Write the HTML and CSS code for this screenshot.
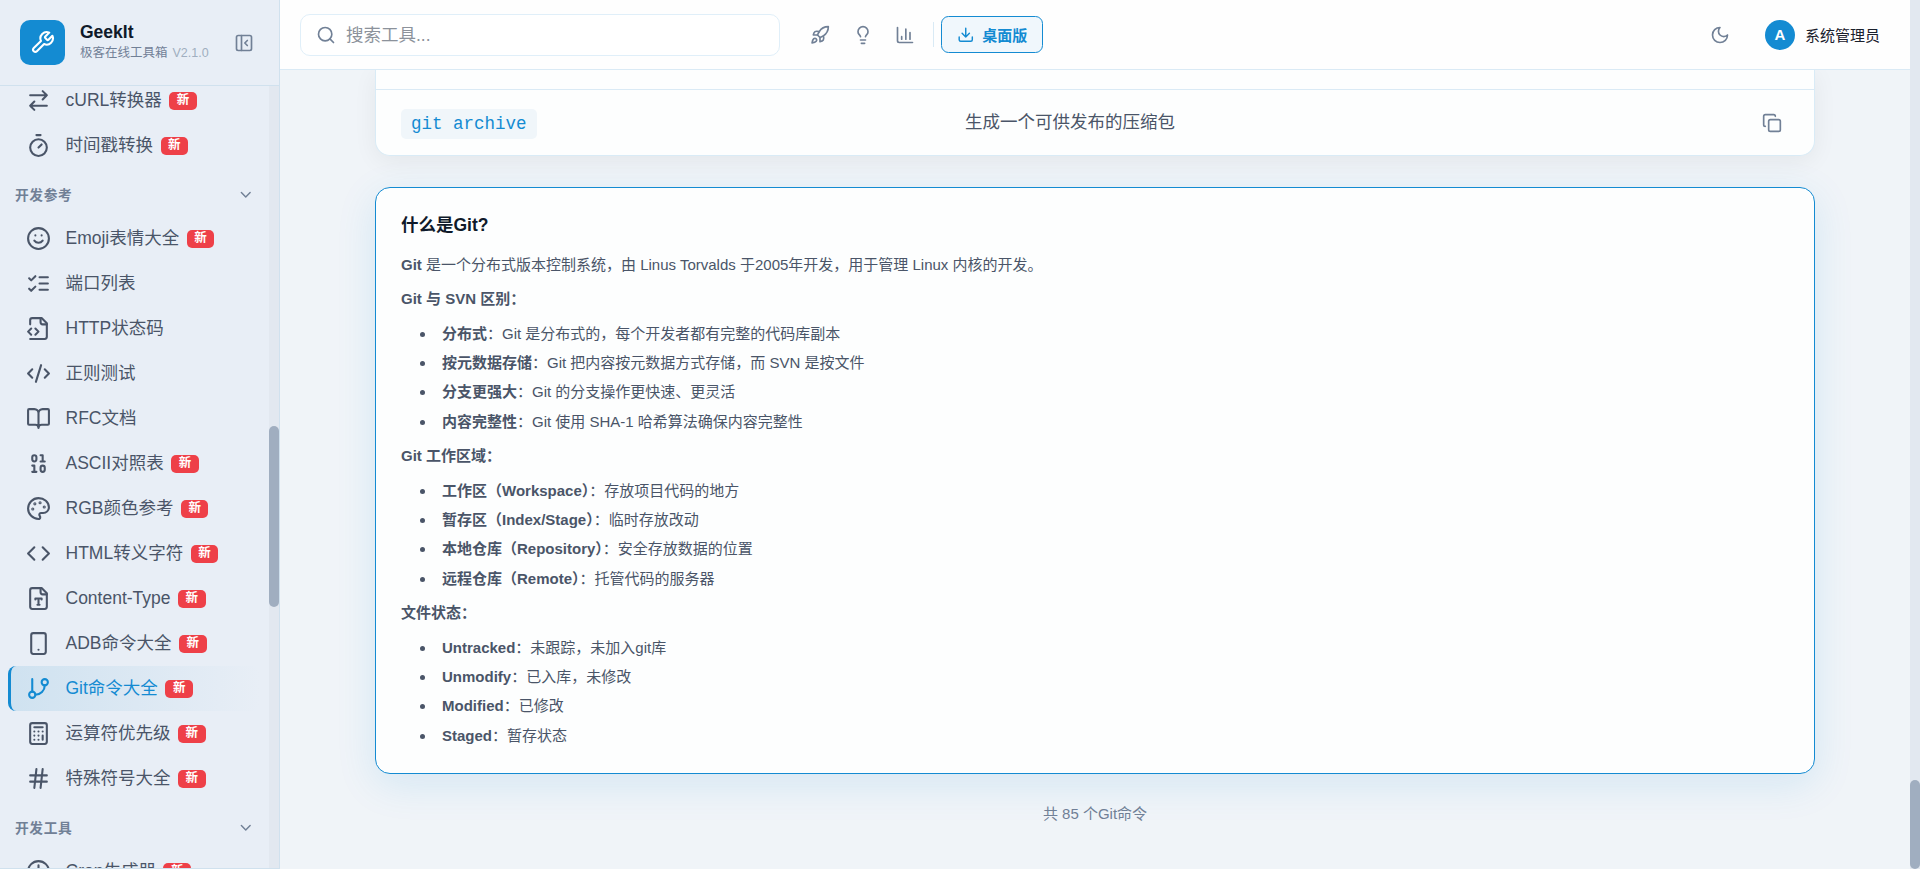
FILE: index.html
```html
<!DOCTYPE html>
<html lang="zh-CN">
<head>
    <meta charset="UTF-8">
    <meta name="viewport" content="width=device-width, initial-scale=1.0">
    <title>Git命令大全 - GeekIt</title>
    <link rel="stylesheet" href="styles.css">
</head>

<body>
    <!-- icon set -->
    <svg class="sprite">
        <symbol id="wrench" viewBox="0 0 24 24"><path d="M14.7 6.3a1 1 0 0 0 0 1.4l1.6 1.6a1 1 0 0 0 1.4 0l3.77-3.77a6 6 0 0 1-7.94 7.94l-6.91 6.91a2.12 2.12 0 0 1-3-3l6.91-6.91a6 6 0 0 1 7.94-7.94l-3.76 3.76z"/></symbol>
        <symbol id="panel" viewBox="0 0 24 24"><rect x="3" y="3" width="18" height="18" rx="2"/><path d="M9 3v18M16 15l-3-3 3-3"/></symbol>
        <symbol id="chevron" viewBox="0 0 24 24"><path d="m6 9 6 6 6-6"/></symbol>
        <symbol id="swap" viewBox="0 0 24 24"><path d="m16 3 4 4-4 4M20 7H4M8 21l-4-4 4-4M4 17h16"/></symbol>
        <symbol id="timer" viewBox="0 0 24 24"><path d="M10 2h4M12 14l3-3"/><circle cx="12" cy="14" r="8"/></symbol>
        <symbol id="smile" viewBox="0 0 24 24"><circle cx="12" cy="12" r="10"/><path d="M8 14s1.5 2 4 2 4-2 4-2M9 9h.01M15 9h.01"/></symbol>
        <symbol id="checks" viewBox="0 0 24 24"><path d="m3 17 2 2 4-4M3 7l2 2 4-4M13 6h8M13 12h8M13 18h8"/></symbol>
        <symbol id="filecode" viewBox="0 0 24 24"><path d="M4 22h14a2 2 0 0 0 2-2V7l-5-5H6a2 2 0 0 0-2 2v4"/><path d="M14 2v4a2 2 0 0 0 2 2h4M5 12l-3 3 3 3M9 18l3-3-3-3"/></symbol>
        <symbol id="codexml" viewBox="0 0 24 24"><path d="m18 16 4-4-4-4M6 8l-4 4 4 4M14.5 4l-5 16"/></symbol>
        <symbol id="book" viewBox="0 0 24 24"><path d="M12 7v14M3 18a1 1 0 0 1-1-1V4a1 1 0 0 1 1-1h5a4 4 0 0 1 4 4 4 4 0 0 1 4-4h5a1 1 0 0 1 1 1v13a1 1 0 0 1-1 1h-6a3 3 0 0 0-3 3 3 3 0 0 0-3-3z"/></symbol>
        <symbol id="binary" viewBox="0 0 24 24"><rect x="14" y="14" width="4" height="6" rx="2"/><rect x="6" y="4" width="4" height="6" rx="2"/><path d="M6 20h4M14 10h4M6 14h2v6M14 4h2v6"/></symbol>
        <symbol id="palette" viewBox="0 0 24 24"><circle class="dot" cx="13.5" cy="6.5" r=".5"/><circle class="dot" cx="17.5" cy="10.5" r=".5"/><circle class="dot" cx="8.5" cy="7.5" r=".5"/><circle class="dot" cx="6.5" cy="12.5" r=".5"/><path d="M12 2C6.5 2 2 6.5 2 12s4.5 10 10 10c.926 0 1.648-.746 1.648-1.688 0-.437-.18-.835-.437-1.125-.29-.289-.438-.652-.438-1.125a1.64 1.64 0 0 1 1.668-1.668h1.996c3.051 0 5.555-2.503 5.555-5.554C21.965 6.012 17.461 2 12 2z"/></symbol>
        <symbol id="code" viewBox="0 0 24 24"><path d="m16 18 6-6-6-6M8 6l-6 6 6 6"/></symbol>
        <symbol id="filetype" viewBox="0 0 24 24"><path d="M15 2H6a2 2 0 0 0-2 2v16a2 2 0 0 0 2 2h12a2 2 0 0 0 2-2V7Z"/><path d="M14 2v4a2 2 0 0 0 2 2h4M9 13v-1h6v1M12 12v6M11 18h2"/></symbol>
        <symbol id="phone" viewBox="0 0 24 24"><rect x="5" y="2" width="14" height="20" rx="2"/><path d="M12 18h.01"/></symbol>
        <symbol id="branch" viewBox="0 0 24 24"><path d="M6 3v12M18 9a9 9 0 0 1-9 9"/><circle cx="18" cy="6" r="3"/><circle cx="6" cy="18" r="3"/></symbol>
        <symbol id="calculator" viewBox="0 0 24 24"><rect x="4" y="2" width="16" height="20" rx="2"/><path d="M8 6h8M16 14v4M16 10h.01M12 10h.01M8 10h.01M12 14h.01M8 14h.01M12 18h.01M8 18h.01"/></symbol>
        <symbol id="hash" viewBox="0 0 24 24"><path d="M4 9h16M4 15h16M10 3 8 21M16 3l-2 18"/></symbol>
        <symbol id="clock" viewBox="0 0 24 24"><circle cx="12" cy="12" r="10"/><path d="M12 6v6l4 2"/></symbol>
        <symbol id="search" viewBox="0 0 24 24"><circle cx="11" cy="11" r="8"/><path d="m21 21-4.3-4.3"/></symbol>
        <symbol id="rocket" viewBox="0 0 24 24"><path d="M4.5 16.5c-1.5 1.26-2 5-2 5s3.74-.5 5-2c.71-.84.7-2.13-.09-2.91a2.18 2.18 0 0 0-2.91-.09zM12 15l-3-3a22 22 0 0 1 2-3.95A12.88 12.88 0 0 1 22 2c0 2.72-.78 7.5-6 11a22.35 22.35 0 0 1-4 2z"/><path d="M9 12H4s.55-3.03 2-4c1.62-1.08 5 0 5 0M12 15v5s3.03-.55 4-2c1.08-1.62 0-5 0-5"/></symbol>
        <symbol id="bulb" viewBox="0 0 24 24"><path d="M15 14c.2-1 .7-1.7 1.5-2.5 1-.9 1.5-2.2 1.5-3.5A6 6 0 0 0 6 8c0 1 .2 2.2 1.5 3.5.7.7 1.3 1.5 1.5 2.5M9 18h6M10 22h4"/></symbol>
        <symbol id="chart" viewBox="0 0 24 24"><path d="M3 3v16a2 2 0 0 0 2 2h16M18 17V9M13 17V5M8 17v-3"/></symbol>
        <symbol id="download" viewBox="0 0 24 24"><path d="M21 15v4a2 2 0 0 1-2 2H5a2 2 0 0 1-2-2v-4M7 10l5 5 5-5M12 15V3"/></symbol>
        <symbol id="moon" viewBox="0 0 24 24"><path d="M12 3a6 6 0 0 0 9 9 9 9 0 1 1-9-9Z"/></symbol>
        <symbol id="copy" viewBox="0 0 24 24"><rect x="8" y="8" width="14" height="14" rx="2"/><path d="M4 16c-1.1 0-2-.9-2-2V4c0-1.1.9-2 2-2h10c1.1 0 2 .9 2 2"/></symbol>
    </svg>

    <div class="app">
        <aside class="sidebar">
            <div class="sidebar_header">
                <div class="logo"><svg class="icon"><use href="#wrench"/></svg></div>
                <div class="brand">
                    <div class="brand_name">GeekIt</div>
                    <div class="brand_sub">极客在线工具箱 <span class="version">V2.1.0</span></div>
                </div>
                <svg class="icon icon_collapse"><use href="#panel"/></svg>
            </div>
            <div class="sidebar_body">
                <nav class="menu">
                    <a class="menu_item"><svg class="icon"><use href="#swap"/></svg><span class="label">cURL转换器</span><span class="badge">新</span></a>
                    <a class="menu_item"><svg class="icon"><use href="#timer"/></svg><span class="label">时间戳转换</span><span class="badge">新</span></a>
                    <div class="menu_title">开发参考<svg class="icon"><use href="#chevron"/></svg></div>
                    <a class="menu_item"><svg class="icon"><use href="#smile"/></svg><span class="label">Emoji表情大全</span><span class="badge">新</span></a>
                    <a class="menu_item"><svg class="icon"><use href="#checks"/></svg><span class="label">端口列表</span></a>
                    <a class="menu_item"><svg class="icon"><use href="#filecode"/></svg><span class="label">HTTP状态码</span></a>
                    <a class="menu_item"><svg class="icon"><use href="#codexml"/></svg><span class="label">正则测试</span></a>
                    <a class="menu_item"><svg class="icon"><use href="#book"/></svg><span class="label">RFC文档</span></a>
                    <a class="menu_item"><svg class="icon"><use href="#binary"/></svg><span class="label">ASCII对照表</span><span class="badge">新</span></a>
                    <a class="menu_item"><svg class="icon"><use href="#palette"/></svg><span class="label">RGB颜色参考</span><span class="badge">新</span></a>
                    <a class="menu_item"><svg class="icon"><use href="#code"/></svg><span class="label">HTML转义字符</span><span class="badge">新</span></a>
                    <a class="menu_item"><svg class="icon"><use href="#filetype"/></svg><span class="label">Content-Type</span><span class="badge">新</span></a>
                    <a class="menu_item"><svg class="icon"><use href="#phone"/></svg><span class="label">ADB命令大全</span><span class="badge">新</span></a>
                    <a class="menu_item active"><svg class="icon"><use href="#branch"/></svg><span class="label">Git命令大全</span><span class="badge">新</span></a>
                    <a class="menu_item"><svg class="icon"><use href="#calculator"/></svg><span class="label">运算符优先级</span><span class="badge">新</span></a>
                    <a class="menu_item"><svg class="icon"><use href="#hash"/></svg><span class="label">特殊符号大全</span><span class="badge">新</span></a>
                    <div class="menu_title">开发工具<svg class="icon"><use href="#chevron"/></svg></div>
                    <a class="menu_item"><svg class="icon"><use href="#clock"/></svg><span class="label">Cron生成器</span><span class="badge">新</span></a>
                </nav>
                <div class="scrollbar"><div class="thumb thumb_menu"></div></div>
            </div>
        </aside>

        <div class="main">
            <header class="topbar">
                <div class="search"><svg class="icon"><use href="#search"/></svg><span class="label">搜索工具...</span></div>
                <div class="topbar_links">
                    <svg class="icon"><use href="#rocket"/></svg>
                    <svg class="icon"><use href="#bulb"/></svg>
                    <svg class="icon"><use href="#chart"/></svg>
                </div>
                <div class="divider"></div>
                <button class="desktop_btn"><svg class="icon"><use href="#download"/></svg>桌面版</button>
                <div class="user">
                    <svg class="icon"><use href="#moon"/></svg>
                    <div class="avatar">A</div>
                    <span class="user_name">系统管理员</span>
                </div>
            </header>

            <div class="content">
                <section class="card card_table">
                    <div class="row row_prev"></div>
                    <div class="row">
                        <div class="cell_cmd"><code>git archive</code></div>
                        <div class="cell_desc">生成一个可供发布的压缩包</div>
                        <svg class="icon"><use href="#copy"/></svg>
                    </div>
                </section>

                <section class="card card_info">
                    <h3>什么是Git?</h3>
                    <p><strong>Git</strong> 是一个分布式版本控制系统，由 Linus Torvalds 于2005年开发，用于管理 Linux 内核的开发。</p>
                    <p><strong>Git 与 SVN 区别：</strong></p>
                    <ul>
                        <li><strong>分布式</strong>：Git 是分布式的，每个开发者都有完整的代码库副本</li>
                        <li><strong>按元数据存储</strong>：Git 把内容按元数据方式存储，而 SVN 是按文件</li>
                        <li><strong>分支更强大</strong>：Git 的分支操作更快速、更灵活</li>
                        <li><strong>内容完整性</strong>：Git 使用 SHA-1 哈希算法确保内容完整性</li>
                    </ul>
                    <p><strong>Git 工作区域：</strong></p>
                    <ul>
                        <li><strong>工作区（Workspace）</strong>：存放项目代码的地方</li>
                        <li><strong>暂存区（Index/Stage）</strong>：临时存放改动</li>
                        <li><strong>本地仓库（Repository）</strong>：安全存放数据的位置</li>
                        <li><strong>远程仓库（Remote）</strong>：托管代码的服务器</li>
                    </ul>
                    <p><strong>文件状态：</strong></p>
                    <ul>
                        <li><strong>Untracked</strong>：未跟踪，未加入git库</li>
                        <li><strong>Unmodify</strong>：已入库，未修改</li>
                        <li><strong>Modified</strong>：已修改</li>
                        <li><strong>Staged</strong>：暂存状态</li>
                    </ul>
                </section>

                <div class="total">共 85 个Git命令</div>
            </div>
        </div>
        <div class="scrollbar"><div class="thumb thumb_page"></div></div>
    </div>
</body>
</html>
```
FILE: styles.css
```css
* {
    margin: 0;
    padding: 0;
    box-sizing: border-box;
}

body {
    font-family: "Liberation Sans", "Noto Sans CJK SC", sans-serif;
    font-size: 15px;
    color: #4a5568;
    background: #f0f4f8;
    overflow: hidden;
}

.sprite {
    display: none;
}

.dot {
    fill: currentColor;
}

.icon {
    width: 20px;
    height: 20px;
    flex-shrink: 0;
    fill: none;
    stroke: currentColor;
    stroke-width: 2;
    stroke-linecap: round;
    stroke-linejoin: round;
}

.app {
    display: flex;
    height: 100vh;
}

/* sidebar */
.sidebar {
    display: flex;
    flex-direction: column;
    width: 280px;
    flex-shrink: 0;
    background: #e8eef6;
    border-right: 1px solid #d0e1ee;
    border-bottom: 1px solid #d0e1ee;
}

.sidebar_header {
    display: flex;
    align-items: center;
    height: 86px;
    flex-shrink: 0;
    padding: 0 25px 0 20px;
    border-bottom: 1px solid #d0e1ee;
}

.logo {
    display: flex;
    align-items: center;
    justify-content: center;
    width: 45px;
    height: 45px;
    margin-right: 15px;
    border-radius: 10px;
    background: #148bd2;
    color: #fff;
}

.logo .icon {
    width: 25px;
    height: 25px;
}

.brand {
    flex: 1;
}

.brand_name {
    font-size: 17.5px;
    font-weight: bold;
    line-height: 22px;
    color: #0f1a2a;
}

.brand_sub {
    font-size: 12.5px;
    line-height: 21px;
    white-space: nowrap;
    color: #718096;
}

.version {
    margin-left: 1.5px;
    color: #a0aec0;
}

.icon_collapse {
    color: #718096;
}

.sidebar_body {
    display: flex;
    flex: 1;
    min-height: 0;
    overflow: hidden;
}

.menu {
    flex: 1;
    margin-top: -8px;
    padding: 0 9px 0 8px;
}

.menu_item {
    display: flex;
    align-items: center;
    height: 45px;
    padding-left: 15px;
    border-left: 3px solid transparent;
    border-radius: 8px;
    font-size: 17.5px;
    line-height: 26px;
    white-space: nowrap;
}

.menu_item .icon {
    width: 25px;
    height: 25px;
    margin-right: 14.5px;
}

.menu_item.active {
    color: #148bd2;
    border-left-color: #148bd2;
    background: linear-gradient(90deg, #cfe2f0, #e8eef6);
}

.label {
    margin-top: -2px;
}

.badge {
    height: 18px;
    margin-left: 7.5px;
    padding: 0 7.5px;
    border-radius: 5px;
    background: #ee4048;
    color: #fff;
    font-size: 12.5px;
    font-weight: bold;
    line-height: 17px;
}

.menu_title {
    display: flex;
    align-items: center;
    justify-content: space-between;
    height: 48px;
    padding: 3px 6px 0 7px;
    font-size: 13.75px;
    font-weight: bold;
    letter-spacing: 0.6px;
    color: #718096;
}

.menu_title .icon {
    width: 17.5px;
    height: 17.5px;
    margin-top: 3px;
}

.scrollbar {
    width: 10px;
    flex-shrink: 0;
    background: #e2e8f0;
}

.thumb {
    border-radius: 5px;
    background: #a0aec0;
}

.thumb_menu {
    height: 181px;
    margin-top: 340px;
}

.thumb_page {
    height: 89px;
    margin-top: 780px;
}

/* top bar */
.main {
    flex: 1;
    min-width: 0;
}

.topbar {
    position: relative;
    display: flex;
    align-items: center;
    height: 70px;
    padding: 0 30px 0 20px;
    background: #fefefe;
    border-bottom: 1px solid #daeaf5;
}

.search {
    display: flex;
    align-items: center;
    width: 480px;
    height: 42px;
    padding-left: 15px;
    border: 1px solid #e0eff9;
    border-radius: 10px;
    background: #fff;
    font-size: 17.5px;
    color: #8c929b;
}

.search .icon {
    margin-right: 10px;
    color: #718096;
}

.topbar_links {
    display: flex;
    gap: 22.5px;
    margin-left: 30px;
    color: #718096;
}

.divider {
    width: 1px;
    height: 25px;
    margin: 0 7px 0 18px;
    background: #d9eaf5;
}

.desktop_btn {
    display: flex;
    align-items: center;
    justify-content: center;
    gap: 8px;
    width: 102px;
    height: 37px;
    border: 1px solid #148bd2;
    border-radius: 7.5px;
    background: #f0f7fc;
    color: #148bd2;
    font-family: inherit;
    font-size: 15px;
    font-weight: 600;
}

.desktop_btn .icon {
    width: 17.5px;
    height: 17.5px;
}

.user {
    display: flex;
    align-items: center;
    margin-left: auto;
    color: #718096;
}

.avatar {
    width: 30px;
    height: 30px;
    margin: 0 10px 0 35px;
    border-radius: 50%;
    background: #148bd2;
    color: #fff;
    font-weight: bold;
    line-height: 30px;
    text-align: center;
}

.user_name {
    margin-top: -1px;
    color: #1a202c;
}

/* content */
.content {
    width: 1440px;
    margin: 0 auto;
}

.card {
    background: #fdfefe;
    border: 1px solid #d9ebf6;
    border-radius: 15px;
}

.card_table {
    border-top: none;
    border-radius: 0 0 15px 15px;
    box-shadow: 0 5px 25px rgba(0, 0, 0, 0.06);
}

.row {
    display: flex;
    align-items: center;
    height: 65px;
    padding: 0 32px 0 25px;
}

.row_prev {
    height: 20px;
    border-bottom: 1px solid #daeaf5;
}

.cell_cmd {
    width: 564px;
}

.cell_cmd code {
    display: block;
    width: fit-content;
    height: 30px;
    margin-top: 3px;
    padding: 0 10px;
    border-radius: 5px;
    background: #f0f6fa;
    color: #148bd2;
    font-family: "Courier New", "Liberation Mono", monospace;
    font-size: 17.5px;
    line-height: 31px;
}

.cell_desc {
    flex: 1;
    margin-top: -4px;
    font-size: 17.5px;
}

.row .icon {
    color: #718096;
}

.card_info {
    position: relative;
    height: 587px;
    margin-top: 31px;
    padding: 23px 25px;
    border-color: #148bd2;
    box-shadow: 0 10px 40px rgba(20, 139, 210, 0.12);
}

.card_info h3 {
    margin-bottom: 12.5px;
    font-size: 17.5px;
    line-height: 28px;
    color: #0f1a2a;
}

.card_info p {
    margin-bottom: 8.5px;
    line-height: 25.5px;
}

.card_info ul {
    margin-bottom: 8.4px;
    padding: 1px 0 0 35px;
}

.card_info li {
    margin-bottom: 3.9px;
    padding-left: 6px;
    line-height: 25.5px;
}

.total {
    margin-top: 29px;
    line-height: 22px;
    text-align: center;
    color: #718096;
}
```
